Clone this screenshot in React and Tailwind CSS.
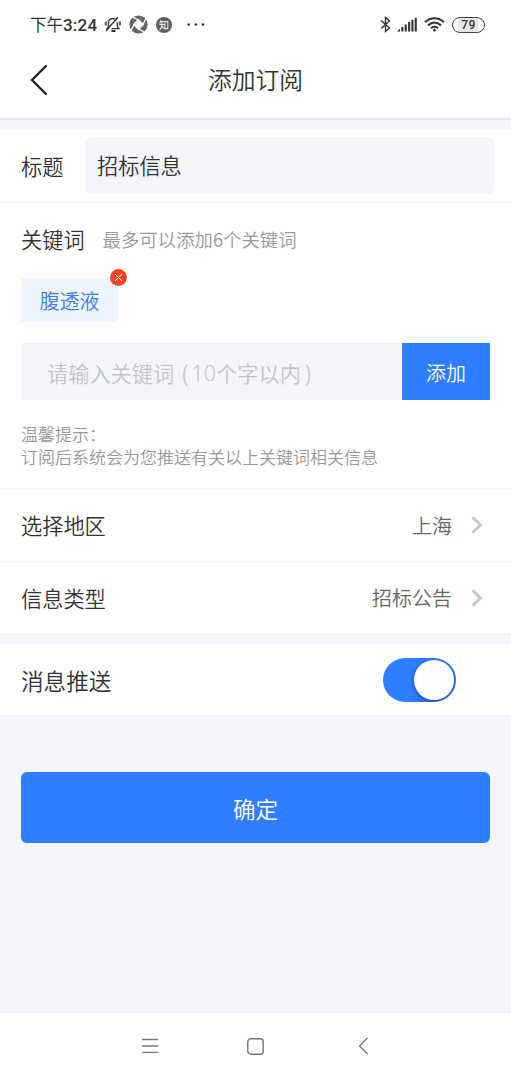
const StatusBar = () => {
  return (
    <div className="flex h-[42px] items-center justify-between pt-[7px] pl-[30px] pr-[26px] text-[#333]">
      <div className="flex items-center">
        <span className="w-[74px] text-[16.5px] leading-5 font-normal whitespace-nowrap">
          下午<span className="font-['Roboto'] text-[17px] font-medium tracking-[0.2px]">3:24</span>
        </span>
        {/* Muted bell */}
        <svg width="18" height="17" viewBox="0 0 18 17" fill="none" stroke="currentColor" strokeWidth="1.3">
          <path d="M4.5 10.5V7C4.5 4.3 6.3 2.7 9 2.7C10 2.7 11 3 11.7 3.6M13.3 6.5V10L15 12.7H7.5" />
          <path d="M2 14.8L14 1.2" strokeWidth="1.5" />
          <path d="M2.2 12.7H3.2L4.5 10.3" />
          <path d="M7.5 15h4" strokeWidth="2" />
          <path d="M1.9 5.5v4M15.8 5.5v4" strokeWidth="2.4" stroke="#666" />
        </svg>
        <svg className="ml-[7px]" width="19" height="19" viewBox="0 0 19 19">
          <circle cx="9.5" cy="9.5" r="9.1" fill="#666" />
          <path d="M9.5 3.8L15.2 9.5L9.5 15.2L3.8 9.5Z" fill="#fff" />
          {/* Four gaps between the blades */}
          <path
            d="M3.8 2.2L9.5 5M16.8 3.8L14 9.5M15.2 16.8L9.5 14M2.2 15.2L5 9.5"
            fill="none"
            stroke="#fff"
            strokeWidth="1.3"
          />
        </svg>
        <span className="ml-[8px] flex h-4 w-4 items-center justify-center rounded-full bg-[#606060] text-[10px] leading-none font-normal text-white">
          知
        </span>
        <svg className="ml-[15px]" width="18" height="4" viewBox="0 0 18 4" fill="currentColor">
          <circle cx="1.7" cy="1.5" r="1.3" />
          <circle cx="8.8" cy="1.5" r="1.3" />
          <circle cx="15.9" cy="1.5" r="1.3" />
        </svg>
      </div>
      <div className="flex items-center">
        <svg width="11" height="17" viewBox="0 0 11 17" fill="none" stroke="currentColor" strokeWidth="1.4">
          <path d="M1 4.5L9.5 12L5.5 15.5V1.5L9.5 5L1 12.5" />
        </svg>
        <svg className="ml-[6px]" width="20" height="15" viewBox="0 0 20 15" fill="currentColor">
          <path d="M0 14.5L3 11.5V14.5Z" />
          <rect x="4.3" y="10" width="2.1" height="4.5" />
          <rect x="7.7" y="7.5" width="2.1" height="7" />
          <rect x="11.1" y="5" width="2.1" height="9.5" />
          <rect x="14.4" y="2.8" width="2.1" height="11.7" />
          <rect x="17.7" y="0.8" width="2.1" height="13.7" />
        </svg>
        <svg className="ml-[7px]" width="21" height="15" viewBox="0 0 21 15" fill="none" stroke="currentColor" strokeWidth="2.1">
          <path d="M1 5.2C6.5-.1 14.5-.1 20 5.2" />
          <path d="M4 8.4C8 4.7 13 4.7 17 8.4" />
          <path d="M7 11.3C9 9.4 12 9.4 14 11.3" />
          <circle cx="10.5" cy="13.2" r="1.4" fill="currentColor" stroke="none" />
        </svg>
        <span className="ml-[7px] flex h-[16px] w-[33px] items-center justify-center rounded-full border-[1.5px] border-[#444] bg-[linear-gradient(90deg,#fff_15%,#e8e8e8_20%,#e8e8e8_80%,#fff_80%)] font-['Roboto'] text-[12px] leading-none font-medium tracking-[0.5px]">
          79
        </span>
      </div>
    </div>
  );
};

const SelectRow = ({ label, value }) => {
  return (
    <div className="flex h-full items-center pl-[21px] pr-[28px]">
      <span className="flex-1 text-[21.2px]">{label}</span>
      <span className="pt-px text-[20px] text-[#666]">{value}</span>
      <svg className="ml-[19px]" width="12" height="18" viewBox="0 0 12 18" fill="none" stroke="#c8c8cc" strokeWidth="3">
        <path d="M1.5 1.3L9.5 9L1.5 16.7" />
      </svg>
    </div>
  );
};

const App = () => {
  return (
    <div className="flex h-[1080px] w-[511px] flex-col overflow-hidden bg-[#f4f6fb] font-['Noto_Sans_CJK_SC',sans-serif] leading-none font-[350] text-[#333]">
      <header className="h-[120px] border-b-2 border-[#e7e8ec] bg-white">
        <StatusBar />
        <div className="flex h-[75px] items-center pl-[30px] pr-[30px]">
          <svg width="18" height="32" viewBox="0 0 18 32" fill="none" stroke="#222" strokeWidth="2.4">
            <path d="M16.5 1.5L2 16L16.5 30.5" />
          </svg>
          <h1 className="flex-1 pr-[18px] pb-px text-center text-[23.8px] leading-none">添加订阅</h1>
        </div>
      </header>

      <section className="mt-[10px] bg-white">
        <div className="flex h-[73px] items-center border-b-2 border-[#f7f7f9] pl-[21px] pr-[17px]">
          <span className="w-[64px] text-[21.2px]">标题</span>
          <div className="flex h-[57px] flex-1 items-center rounded-md bg-[#f4f6fb] pb-[2px] pl-[12px] text-[21.2px]">
            招标信息
          </div>
        </div>

        <div className="h-[286px] border-b border-[#f2f2f4] px-[21px] pt-[25px]">
          <div className="flex h-6 items-center pb-[2px]">
            <span className="text-[21.2px]">关键词</span>
            <span className="ml-[18px] text-[18.4px] text-[#999]">最多可以添加6个关键词</span>
          </div>
          <div className="relative mt-[26px] flex h-[44px] w-[97px] items-center justify-center rounded-xs bg-[#eef5ff] pt-px text-[20px] text-[#3c7fe6]">
            腹透液
            <svg className="absolute -top-[9px] -right-[9px]" width="17" height="17" viewBox="0 0 17 17">
              <circle cx="8.5" cy="8.5" r="8.5" fill="#fb4229" />
              <path d="M5 5L12 12M12 5L5 12" stroke="#fff" strokeWidth="1" />
            </svg>
          </div>
          <div className="mt-[21px] flex h-[57px]">
            <div className="flex flex-1 items-center bg-[#f4f6fb] pt-[3px] pl-[26px] text-[21.2px] text-[#c4c5c9]">
              <span>请输入关键词</span>
              <span className="w-[17px] pr-[3px] text-right">(</span>
              <span className="w-[25px] text-center font-['Noto_Sans'] font-light">10</span>
              <span>个字以内</span>
              <span className="pl-[4px]">)</span>
            </div>
            <button className="w-[88px] bg-[#2f7eff] pt-[2px] text-[20px] leading-none text-white">添加</button>
          </div>
          <p className="mt-[22px] text-[17px] leading-[23px] whitespace-nowrap text-[#999]">
            温馨提示：
            <br />
            订阅后系统会为您推送有关以上关键词相关信息
          </p>
        </div>

        <div className="h-[72px]">
          <SelectRow label="选择地区" value="上海" />
        </div>
        <div className="h-[72px] border-t border-[#f2f2f4]">
          <SelectRow label="信息类型" value="招标公告" />
        </div>
      </section>

      <section className="mt-[11px] flex h-[71px] items-center justify-between bg-white pl-[21px] pr-[55px]">
        <span className="pt-[3px] text-[22.6px]">消息推送</span>
        <span className="flex h-[44px] w-[73px] items-center justify-end overflow-hidden rounded-full bg-[#2f7eff] pr-[2px]">
          <span className="h-10 w-10 rounded-full bg-white shadow-[0_2px_6px_rgba(0,0,0,0.4)]" />
        </span>
      </section>

      <button className="mx-[21px] mt-[57px] h-[71px] rounded-md bg-[#2f7eff] pt-[3px] text-[22.6px] leading-none text-white">
        确定
      </button>

      {/* System navigation */}
      <nav className="mt-auto flex h-[69px] items-center justify-center border-t-2 border-[#edeef1] bg-white pb-px">
        <svg width="16" height="16" viewBox="0 0 16 16" stroke="#777" strokeWidth="1.3">
          <path d="M0 1.5H16M0 8H16M0 14.3H16" />
        </svg>
        <svg className="ml-[89px]" width="17" height="17" viewBox="0 0 17 17" fill="none" stroke="#777" strokeWidth="1.4">
          <rect x=".8" y=".8" width="15.4" height="15.4" rx="3" />
        </svg>
        <svg className="ml-[94px]" width="11" height="18" viewBox="0 0 11 18" fill="none" stroke="#777" strokeWidth="1.4">
          <path d="M9.5 1L1.5 9L9.5 17" />
        </svg>
      </nav>
    </div>
  );
};

export default App;
